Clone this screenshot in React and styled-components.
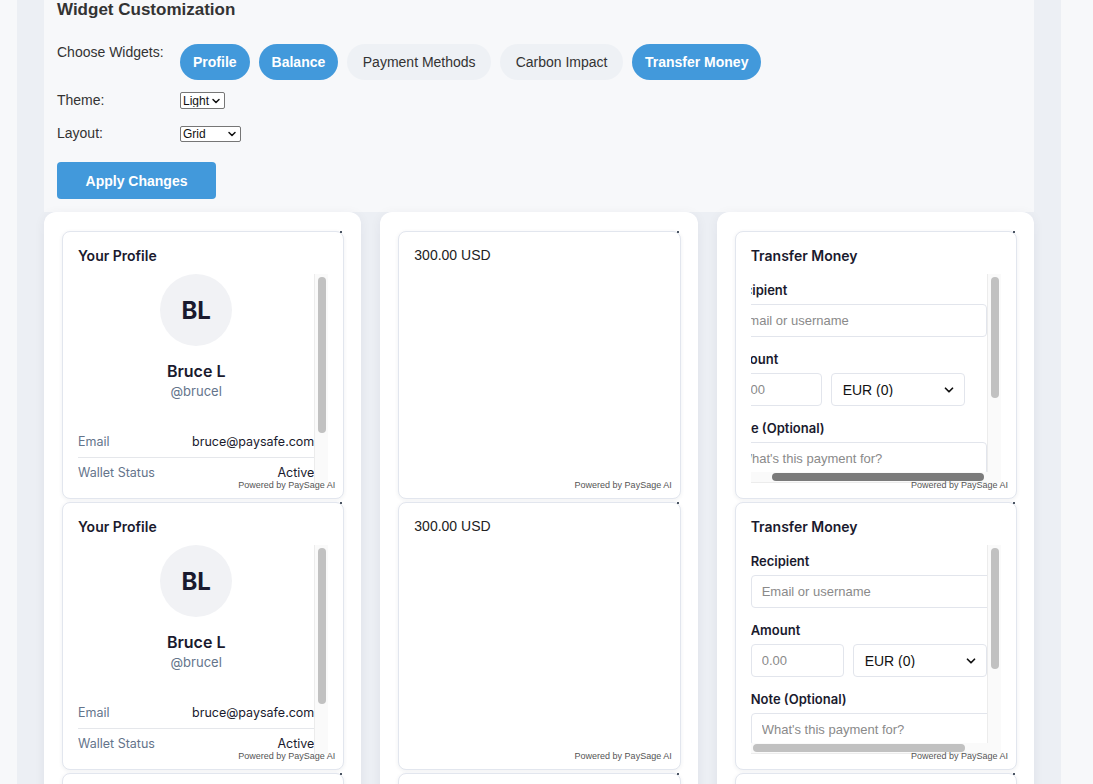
import React, { useEffect, useRef } from "react";
import styled, { createGlobalStyle } from "styled-components";
import { ChevronDown } from "lucide-react";

const GlobalStyle = createGlobalStyle`
  html, body {
    margin: 0;
    padding: 0;
    background: #f7f8fa;
    overflow: hidden;
  }
  body {
    font-family: "Liberation Sans", Arial, Helvetica, sans-serif;
    color: #333;
  }
  * { box-sizing: border-box; }
`;

const widgets = [
  { name: "Profile", active: true },
  { name: "Balance", active: true },
  { name: "Payment Methods", active: false },
  { name: "Carbon Impact", active: false },
  { name: "Transfer Money", active: true },
];

const profileRows = [
  { label: "Email", value: "bruce@paysafe.com" },
  { label: "Wallet Status", value: "Active" },
  { label: "Member Since", value: "2024" },
  { label: "KYC Level", value: "Verified" },
];

function Select({ width, height, options, big }) {
  return (
    <SelectWrap>
      <NativeSelect $w={width} $h={height} $big={big} defaultValue={options[0]}>
        {options.map((o) => (
          <option key={o}>{o}</option>
        ))}
      </NativeSelect>
      <Chevron $big={big}>
        <ChevronDown size={big ? 14 : 12} strokeWidth={3} />
      </Chevron>
    </SelectWrap>
  );
}

// scroll area with its own drawn scrollbars
function ScrollBox({ vThumb, hThumb, hActive, scrollToEnd, children }) {
  const ref = useRef(null);
  useEffect(() => {
    if (scrollToEnd && ref.current) ref.current.scrollLeft = ref.current.scrollWidth;
  }, [scrollToEnd]);

  return (
    <ScrollFrame>
      <ScrollMain>
        <Viewport ref={ref}>{children}</Viewport>
        <VTrack>
          <VThumb $top={vThumb.top} $size={vThumb.size} />
        </VTrack>
      </ScrollMain>
      {hThumb && (
        <HRow>
          <HTrack>
            <HThumb $left={hThumb.left} $size={hThumb.size} $active={hActive} />
          </HTrack>
          <Corner />
        </HRow>
      )}
    </ScrollFrame>
  );
}

function ProfileWidget() {
  return (
    <Card>
      <CardTitle>Your Profile</CardTitle>
      <ScrollBox vThumb={{ top: 3, size: 156 }}>
        <Avatar>BL</Avatar>
        <Name>Bruce L</Name>
        <Handle>@brucel</Handle>
        <Details>
          {profileRows.map((r) => (
            <DetailRow key={r.label}>
              <DetailLabel>{r.label}</DetailLabel>
              <DetailValue>{r.value}</DetailValue>
            </DetailRow>
          ))}
        </Details>
      </ScrollBox>
      <Powered>Powered by PaySage AI</Powered>
    </Card>
  );
}

function BalanceWidget() {
  return (
    <Card>
      <Amount>300.00 USD</Amount>
      <Powered>Powered by PaySage AI</Powered>
    </Card>
  );
}

function TransferWidget({ scrolled }) {
  return (
    <Card>
      <CardTitle>Transfer Money</CardTitle>
      <ScrollBox
        vThumb={{ top: 3, size: 121 }}
        hThumb={{ left: scrolled ? 21 : 2, size: 212 }}
        hActive={scrolled}
        scrollToEnd={scrolled}
      >
        <Form>
          <Field>
            <FieldLabel>Recipient</FieldLabel>
            <TextInput placeholder="Email or username" />
          </Field>
          <Field>
            <FieldLabel>Amount</FieldLabel>
            <AmountRow>
              <AmountInput placeholder="0.00" />
              <Select options={["EUR (0)", "USD (300)"]} big />
            </AmountRow>
          </Field>
          <Field>
            <FieldLabel>Note (Optional)</FieldLabel>
            <TextInput placeholder="What's this payment for?" />
          </Field>
          <SendButton>Send Money</SendButton>
        </Form>
      </ScrollBox>
      <Powered>Powered by PaySage AI</Powered>
    </Card>
  );
}

export default function App() {
  return (
    <>
      <GlobalStyle />
      <Page>
        <Main>
          <Panel>
            <PanelTitle>Widget Customization</PanelTitle>
            <Row $top $mb={12}>
              <RowLabel>Choose Widgets:</RowLabel>
              <Pills>
                {widgets.map((w) => (
                  <Pill key={w.name} $active={w.active}>
                    {w.name}
                  </Pill>
                ))}
              </Pills>
            </Row>
            <Row $mb={16}>
              <RowLabel>Theme:</RowLabel>
              <Select width={45} height={17} options={["Light", "Dark"]} />
            </Row>
            <Row $mb={20}>
              <RowLabel>Layout:</RowLabel>
              <Select width={61} height={16} options={["Grid", "List"]} />
            </Row>
            <ApplyButton>Apply Changes</ApplyButton>
          </Panel>

          <Grid>
            <Column>
              <ProfileWidget />
              <ProfileWidget />
              <ProfileWidget />
            </Column>
            <Column>
              <BalanceWidget />
              <BalanceWidget />
              <BalanceWidget />
            </Column>
            <Column>
              <TransferWidget scrolled />
              <TransferWidget />
              <TransferWidget />
            </Column>
          </Grid>
        </Main>
      </Page>
    </>
  );
}

const Page = styled.div`
  display: flex;
  height: 784px;
  padding-left: 17px;
`;

const Main = styled.div`
  width: 1044px;
  background: #eceff4;
  padding: 0 27px;
`;

// customization panel
const Panel = styled.div`
  background: #f7f8fa;
  padding: 0 13px 13px;
`;

const PanelTitle = styled.h3`
  margin: 0 0 24px;
  font-size: 17px;
  line-height: 20px;
  font-weight: 700;
  color: #333;
`;

const Row = styled.div`
  display: flex;
  align-items: ${(p) => (p.$top ? "flex-start" : "center")};
  margin-bottom: ${(p) => p.$mb}px;
`;

const RowLabel = styled.span`
  width: 123px;
  flex-shrink: 0;
  font-size: 14px;
  line-height: 17px;
  color: #333;
`;

const Pills = styled.div`
  display: flex;
  flex-wrap: wrap;
  gap: 9px;
`;

const Pill = styled.button`
  height: 36px;
  padding: 0 ${(p) => (p.$active ? 13 : 15.5)}px;
  border: none;
  border-radius: 18px;
  background: ${(p) => (p.$active ? "#4299db" : "#eef1f5")};
  color: ${(p) => (p.$active ? "#fff" : "#333")};
  font-family: inherit;
  font-size: 14px;
  font-weight: ${(p) => (p.$active ? 700 : 400)};
  cursor: pointer;
`;

const SelectWrap = styled.span`
  position: relative;
  display: inline-flex;
`;

const NativeSelect = styled.select`
  appearance: none;
  width: ${(p) => (p.$w ? `${p.$w}px` : "100%")};
  height: ${(p) => (p.$h ? `${p.$h}px` : "33px")};
  padding: ${(p) => (p.$big ? "0 11px" : "0 2px")};
  border: 1px solid ${(p) => (p.$big ? "#e2e5ec" : "#767676")};
  border-radius: ${(p) => (p.$big ? "4px" : "2px")};
  background: #fff;
  color: #111;
  font-family: "Liberation Sans", Arial, sans-serif;
  font-size: ${(p) => (p.$big ? "14px" : "12px")};
  line-height: 1;
  outline: none;
`;

const Chevron = styled.span`
  position: absolute;
  top: 50%;
  right: ${(p) => (p.$big ? "9px" : "3px")};
  transform: translateY(-50%);
  display: flex;
  color: #111;
  pointer-events: none;
`;

const ApplyButton = styled.button`
  width: 159px;
  height: 37px;
  border: none;
  border-radius: 4px;
  background: #4299db;
  color: #fff;
  font-family: inherit;
  font-size: 14px;
  font-weight: 700;
  cursor: pointer;
`;

// widget grid
const Grid = styled.div`
  display: grid;
  grid-template-columns: repeat(3, 1fr);
  gap: 19px;
`;

const Column = styled.div`
  display: flex;
  flex-direction: column;
  gap: 3px;
  padding: 19px 17px 0 18px;
  background: #fff;
  border-radius: 12px;
  box-shadow: 0 2px 12px rgba(30, 40, 70, 0.06);
`;

const Card = styled.div`
  position: relative;
  display: flex;
  flex-direction: column;
  flex-shrink: 0;
  height: 268px;
  padding: 15px;
  background: #fff;
  border: 1px solid #e2e6ee;
  border-radius: 8px;
  box-shadow: 0 1px 4px rgba(30, 40, 70, 0.07);

  &::after {
    content: "";
    position: absolute;
    top: -1px;
    right: 1px;
    width: 2px;
    height: 2px;
    background: #4b5563;
  }
`;

const CardTitle = styled.h4`
  margin: 0 0 10px;
  font-family: Inter, "Liberation Sans", sans-serif;
  font-size: 14px;
  line-height: 17px;
  font-weight: 600;
  color: #1a1a2e;
`;

const ScrollFrame = styled.div`
  flex: 1;
  min-height: 0;
  display: flex;
  flex-direction: column;
`;

const ScrollMain = styled.div`
  flex: 1;
  min-height: 0;
  display: flex;
`;

const Viewport = styled.div`
  flex: 1;
  min-width: 0;
  overflow: hidden;
`;

const VTrack = styled.div`
  flex-shrink: 0;
  width: 14px;
  padding: 0 2px 0 3px;
  background: #fafafa;
  border-left: 1px solid #ececec;
`;

const VThumb = styled.div`
  width: 8px;
  height: ${(p) => p.$size}px;
  margin-top: ${(p) => p.$top}px;
  border-radius: 4px;
  background: #c1c1c1;
`;

const HRow = styled.div`
  display: flex;
  height: 11px;
  flex-shrink: 0;
`;

const HTrack = styled.div`
  flex: 1;
  padding-top: 1px;
  background: #fafafa;
  border-bottom: 1px solid #ececec;
`;

const HThumb = styled.div`
  width: ${(p) => p.$size}px;
  height: 8px;
  margin-left: ${(p) => p.$left}px;
  border-radius: 4px;
  background: ${(p) => (p.$active ? "#7b7b7b" : "#c1c1c1")};
`;

const Corner = styled.div`
  width: 14px;
  background: #fafafa;
`;

const Powered = styled.div`
  position: absolute;
  right: 8px;
  bottom: 8px;
  font-size: 9px;
  line-height: 10px;
  color: #555;
`;

// profile
const Avatar = styled.div`
  display: flex;
  align-items: center;
  justify-content: center;
  width: 72px;
  height: 72px;
  margin: 0 auto;
  border-radius: 50%;
  background: #f1f2f5;
  font-family: Inter, "Liberation Sans", sans-serif;
  font-size: 24px;
  font-weight: 700;
  color: #1a1a2e;
`;

const Name = styled.div`
  margin-top: 16px;
  text-align: center;
  font-family: Inter, "Liberation Sans", sans-serif;
  font-size: 16px;
  line-height: 19px;
  font-weight: 600;
  color: #1a1a2e;
`;

const Handle = styled.div`
  margin-top: 2px;
  text-align: center;
  font-family: Inter, "Liberation Sans", sans-serif;
  font-size: 13px;
  line-height: 16px;
  color: #64748b;
`;

const Details = styled.div`
  margin-top: 28px;
`;

const DetailRow = styled.div`
  display: flex;
  justify-content: space-between;
  padding: 7px 0;
  border-bottom: 1px solid #e5e7eb;
  font-family: Inter, "Liberation Sans", sans-serif;
  font-size: 12.5px;
  line-height: 16px;
  white-space: nowrap;
`;

const DetailLabel = styled.span`
  color: #64748b;
`;

const DetailValue = styled.span`
  color: #1a1a2e;
`;

// balance
const Amount = styled.div`
  font-size: 14px;
  line-height: 17px;
  color: #222;
`;

// transfer
const Form = styled.div`
  padding: 8px 0 30px;
`;

const Field = styled.div`
  margin-bottom: 14px;
`;

const FieldLabel = styled.div`
  margin-bottom: 6px;
  font-family: Inter, "Liberation Sans", sans-serif;
  font-size: 13px;
  line-height: 16px;
  font-weight: 600;
  color: #1a1a2e;
  white-space: nowrap;
`;

const TextInput = styled.input`
  box-sizing: content-box;
  display: block;
  width: 100%;
  height: 31px;
  padding: 0 10px;
  border: 1px solid #e2e5ec;
  border-radius: 4px;
  font-family: "Liberation Sans", Arial, sans-serif;
  font-size: 13px;
  outline: none;

  &::placeholder {
    color: #8a8a8a;
  }
`;

const AmountRow = styled.div`
  display: flex;
  gap: 9px;
  width: 100%;

  & > span {
    flex: 1;
  }
`;

const AmountInput = styled.input`
  width: 93px;
  height: 33px;
  padding: 0 10px;
  border: 1px solid #e2e5ec;
  border-radius: 4px;
  font-family: "Liberation Sans", Arial, sans-serif;
  font-size: 13px;
  outline: none;

  &::placeholder {
    color: #8a8a8a;
  }
`;

const SendButton = styled.button`
  width: 100%;
  height: 38px;
  margin-top: 4px;
  border: none;
  border-radius: 4px;
  background: #4299db;
  color: #fff;
  font-family: inherit;
  font-size: 14px;
  font-weight: 700;
`;
